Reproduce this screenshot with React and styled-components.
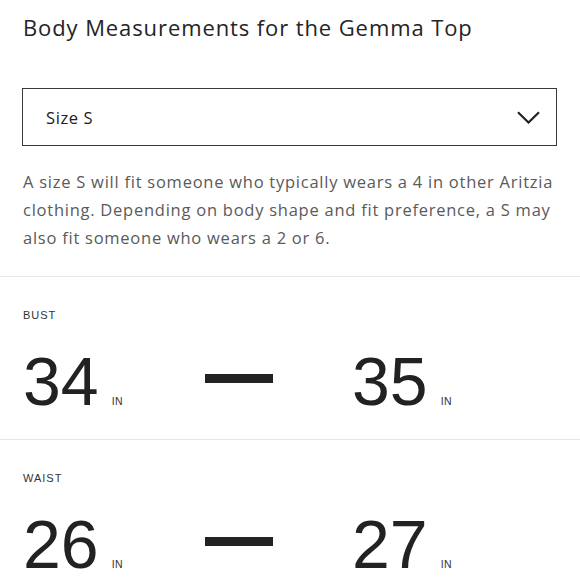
import React from "react";
import styled, { createGlobalStyle } from "styled-components";

const Global = createGlobalStyle`
  html, body { margin: 0; padding: 0; background: #fff; }
  body { font-family: "Open Sans", "Liberation Sans", sans-serif; color: #222; }
`;

const Page = styled.div`
  width: 580px;
  overflow: hidden;
`;

const Intro = styled.div`
  padding: 12px 22px 0 23px;
`;

const Title = styled.h1`
  margin: 0;
  font-size: 22px;
  line-height: 30px;
  font-weight: 400;
  letter-spacing: 0.9px;
  color: #242424;
`;

const Select = styled.div`
  margin: 46px 0 0 -1px;
  width: 535px;
  height: 58px;
  box-sizing: border-box;
  border: 1.5px solid #3a3a3a;
  display: flex;
  align-items: center;
  justify-content: space-between;
  padding: 0 16px 0 23px;
  font-size: 16.5px;
  letter-spacing: 0.6px;
  color: #222;
`;

const Paragraph = styled.p`
  margin: 22px 0 0;
  font-size: 16.5px;
  line-height: 28px;
  letter-spacing: 0.75px;
  color: #5a5a5a;
`;

const Divider = styled.hr`
  margin: ${(p) => p.$top || 0}px 0 0;
  border: 0;
  border-top: 1.5px solid #e6e6e6;
  height: 0;
`;

const Section = styled.section`
  padding: 31px 22px 0 23px;
  height: 162px;
  box-sizing: border-box;
`;

const Label = styled.div`
  font-family: "Liberation Sans", sans-serif;
  font-size: 11px;
  letter-spacing: 1px;
  line-height: 14px;
  color: #333;
`;

const Range = styled.div`
  display: grid;
  grid-template-columns: 181px 148px auto;
  align-items: baseline;
  margin-top: 19px;
  font-family: "Liberation Sans", sans-serif;
`;

const Value = styled.div`
  display: flex;
  align-items: baseline;
`;

const Number = styled.span`
  font-size: 68px;
  line-height: 80px;
  color: #222;
`;

const Unit = styled.span`
  font-size: 10.5px;
  letter-spacing: 0.5px;
  margin-left: 13px;
  color: #333;
`;

const Dash = styled.div`
  width: 68px;
  height: 9px;
  background: #222;
  align-self: center;
  margin-left: 1px;
  margin-top: ${(p) => p.$shift || 0}px;
`;

const Chevron = () => (
  <svg width="23" height="13" viewBox="0 0 23 13" fill="none">
    <path d="M1 1.2 L11.5 11.5 L22 1.2" stroke="#222" strokeWidth="2.2" />
  </svg>
);

const rows = [
  { label: "BUST", from: 34, to: 35 },
  { label: "WAIST", from: 26, to: 27 },
];

export default function App() {
  return (
    <Page>
      <Global />
      <Intro>
        <Title>Body Measurements for the Gemma Top</Title>
        <Select>
          <span>Size S</span>
          <Chevron />
        </Select>
        <Paragraph>
          A size S will fit someone who typically wears a 4 in other Aritzia
          clothing. Depending on body shape and fit preference, a S may also
          fit someone who wears a 2 or 6.
        </Paragraph>
      </Intro>
      <Divider $top={24} />
      {rows.map((r) => (
        <React.Fragment key={r.label}>
          <Section>
            <Label>{r.label}</Label>
            <Range>
              <Value>
                <Number>{r.from}</Number>
                <Unit>IN</Unit>
              </Value>
              <Dash $shift={-6} />
              <Value>
                <Number>{r.to}</Number>
                <Unit>IN</Unit>
              </Value>
            </Range>
          </Section>
          <Divider />
        </React.Fragment>
      ))}
    </Page>
  );
}
